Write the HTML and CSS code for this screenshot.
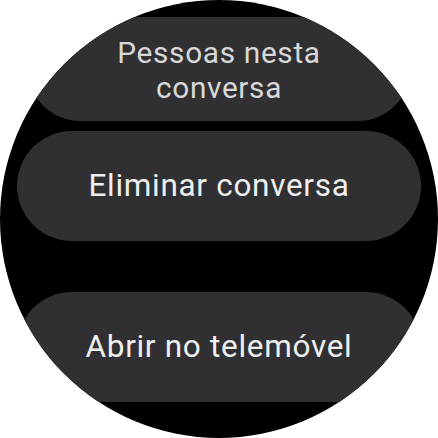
FILE: index.html
```html
<!DOCTYPE html>
<html lang="pt">
<head>
<meta charset="utf-8">
<link rel="stylesheet" href="styles.css">
</head>
<body>
<div class="watch">
  <div class="chip chip--edge">Pessoas nesta<br>conversa</div>
  <div class="chip chip--second">Eliminar conversa</div>
  <div class="chip chip--third">Abrir no telemóvel</div>
</div>
</body>
</html>
```

FILE: styles.css
```css
html, body {
  margin: 0;
  padding: 0;
  background: #ffffff;
}

.watch {
  width: 438px;
  height: 438px;
  box-sizing: border-box;
  border-radius: 50%;
  background: #000000;
  overflow: hidden;
  display: flex;
  flex-direction: column;
  align-items: center;
  padding-top: 17px;
}

.chip {
  flex: none;
  width: 404px;
  height: 110px;
  border-radius: 55px;
  background: #303033;
  color: #efefef;
  display: flex;
  align-items: center;
  justify-content: center;
  text-align: center;
  font-family: Roboto, "Noto Sans", sans-serif;
  font-size: 31.5px;
  letter-spacing: 0.7px;
  line-height: 36px;
}

.chip--edge {
  width: 382px;
  height: 104px;
  border-radius: 52px;
  font-size: 29.8px;
  letter-spacing: 0.66px;
  line-height: 35.4px;
  color: #d8d8d8;
  padding-top: 2px;
  box-sizing: border-box;
}

.chip--second {
  margin-top: 10px;
}

.chip--third {
  margin-top: 51px;
}
```
